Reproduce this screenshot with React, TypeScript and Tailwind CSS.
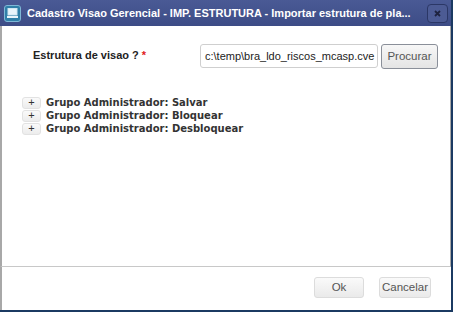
import React from 'react'

function PlusButton() {
  return (
    <span className="mr-[5px] flex h-[12px] w-[19px] items-center justify-center rounded-[3px] border border-[#e2e2e2] bg-gradient-to-b from-[#fafafa] to-[#ececec] text-[11px] leading-none text-[#333]">
      +
    </span>
  )
}

const groups = ['Grupo Administrador: Salvar', 'Grupo Administrador: Bloquear', 'Grupo Administrador: Desbloquear']

export default function App() {
  return (
    <div className="flex h-[312px] w-[453px] flex-col overflow-hidden border-r-[2px] border-b-[2px] border-[#1b3a62] bg-white font-['Liberation_Sans',Arial,sans-serif]">
      {/* Title bar */}
      <div className="flex h-[26px] shrink-0 items-center bg-gradient-to-b from-[#4a5a95] to-[#3d4c86] pl-[4px] pr-[3px]">
        <div className="flex h-[17px] w-[17px] shrink-0 items-center justify-center rounded-[3px] border border-[#7fb7d6] bg-[#2f7fa8]">
          <svg width="11" height="10" viewBox="0 0 11 10">
            <rect x="1" y="0.5" width="9" height="6.5" fill="#e8f4fb" stroke="#cfe6f2" />
            <rect x="0" y="8" width="11" height="2" fill="#e8f4fb" />
          </svg>
        </div>
        <span className="ml-[6px] flex-1 overflow-hidden whitespace-nowrap text-[11px] font-bold text-white">
          Cadastro Visao Gerencial - IMP. ESTRUTURA - Importar estrutura de pla...
        </span>
        <div className="ml-[4px] flex h-[19px] w-[21px] shrink-0 items-center justify-center rounded-[4px] border border-[#2b3766] bg-[#4c5b94]">
          <svg width="7" height="7" viewBox="0 0 7 7">
            <path d="M1 1 L6 6 M6 1 L1 6" stroke="#1e2340" strokeWidth="1.8" />
          </svg>
        </div>
      </div>

      {/* Content */}
      <div className="flex h-[241px] shrink-0 flex-col border-x border-b border-x-[#a8a8a8] border-b-[#c8c8c8] border-l-[2px] bg-white">
        <div className="flex items-start pt-[18px] pl-[31px] pr-[12px]">
          <span className="mt-[3px] flex-1 text-[11px] font-bold text-[#222]">
            Estrutura de visao ? <span className="text-[#e02020]">*</span>
          </span>
          <div className="flex h-[24px] w-[178px] items-center overflow-hidden rounded-[3px] border border-[#cfcfcf] pl-[4px] text-[11px] whitespace-nowrap text-[#222]">
            c:\temp\bra_ldo_riscos_mcasp.cve
          </div>
          <div className="ml-[3px] flex h-[25px] w-[57px] items-center justify-center rounded-[3px] border border-[#8a8f99] bg-gradient-to-b from-[#f7f7f7] to-[#e4e4e4] text-[11.5px] text-[#555]">
            Procurar
          </div>
        </div>
        <div className="flex flex-col pt-[27px] pl-[20px]">
          {groups.map((g) => (
            <div key={g} className="flex h-[13px] items-center">
              <PlusButton />
              <span className="font-['DejaVu_Sans',Verdana,sans-serif] text-[10px] font-bold text-[#333]">{g}</span>
            </div>
          ))}
        </div>
      </div>

      {/* Footer */}
      <div className="flex flex-1 items-start justify-end border-l-[2px] border-l-[#a8a8a8] pt-[10px] pr-[20px]">
        <div className="flex h-[21px] w-[50px] items-center justify-center rounded-[3px] border border-[#dcdcdc] bg-gradient-to-b from-[#fafafa] to-[#eaeaea] text-[11.5px] text-[#555]">
          Ok
        </div>
        <div className="ml-[15px] flex h-[21px] w-[52px] items-center justify-center rounded-[3px] border border-[#dcdcdc] bg-gradient-to-b from-[#fafafa] to-[#eaeaea] text-[11.5px] text-[#555]">
          Cancelar
        </div>
      </div>
    </div>
  )
}
